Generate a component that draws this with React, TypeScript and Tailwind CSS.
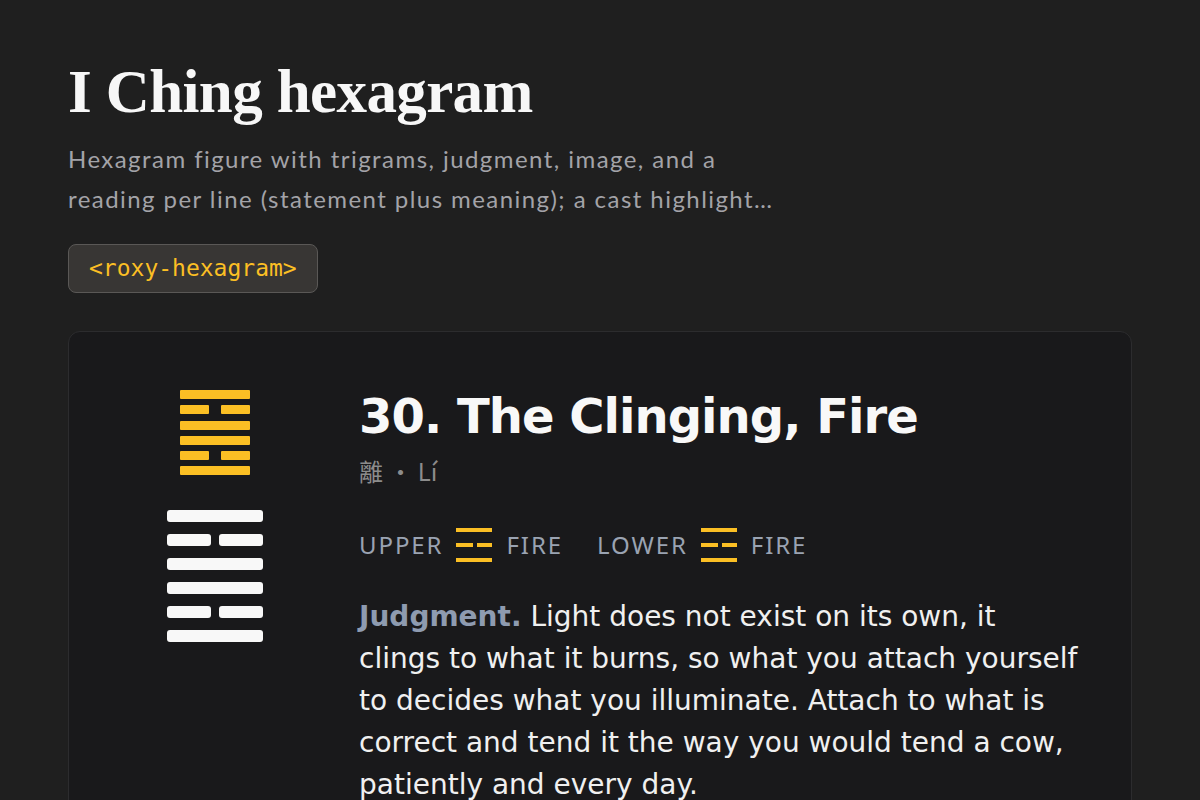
import React from 'react'

type Line = 'yang' | 'yin'

// top to bottom
const lines: Line[] = ['yang', 'yin', 'yang', 'yang', 'yin', 'yang']

const SmallFigure: React.FC = () => (
  <div className="flex flex-col gap-[6.2px] w-[70px]">
    {lines.map((l, i) =>
      l === 'yang'
        ? <div key={i} className="h-[9px] bg-[#fbbf24] rounded-[1px]" />
        : (
          <div key={i} className="flex justify-between h-[9px]">
            <div className="w-[29px] bg-[#fbbf24] rounded-[1px]" />
            <div className="w-[29px] bg-[#fbbf24] rounded-[1px]" />
          </div>
          )
    )}
  </div>
)

const LargeFigure: React.FC = () => (
  <div className="flex flex-col gap-[12px] w-[96px]">
    {lines.map((l, i) =>
      l === 'yang'
        ? <div key={i} className="h-[12px] bg-[#f8f8f8] rounded-[3px]" />
        : (
          <div key={i} className="flex justify-between h-[12px]">
            <div className="w-[44px] bg-[#f8f8f8] rounded-[3px]" />
            <div className="w-[44px] bg-[#f8f8f8] rounded-[3px]" />
          </div>
          )
    )}
  </div>
)

// fire trigram, drawn small next to the labels
const Trigram: React.FC = () => (
  <div className="flex flex-col gap-[11px] w-[36px]">
    <div className="h-[4px] bg-[#fbbf24]" />
    <div className="flex justify-between h-[4px]">
      <div className="w-[17px] bg-[#fbbf24]" />
      <div className="w-[15px] bg-[#fbbf24]" />
    </div>
    <div className="h-[4px] bg-[#fbbf24]" />
  </div>
)

const App: React.FC = () => {
  return (
    <div className="min-h-screen bg-[#1f1f1f] px-[68px] pt-[55px] pb-16">
      <h1 className="text-[61px] leading-[1.2] font-bold text-[#f7f7f7] font-['Liberation_Serif',serif] tracking-[-0.01em]">
        I Ching hexagram
      </h1>
      <p className="mt-[11px] max-w-[730px] text-[24px] leading-[40px] tracking-[0.06em] text-[#a3a3a8] font-['Lato',sans-serif]">
        Hexagram figure with trigrams, judgment, image, and a reading per line (statement plus meaning); a cast highlight…
      </p>
      <div className="mt-[25px] inline-flex items-center h-[49px] px-[20px] rounded-[8px] border border-[#5a5856] bg-[#383634]">
        <code className="text-[23px] text-[#fbbf24] font-['DejaVu_Sans_Mono',monospace]">&lt;roxy-hexagram&gt;</code>
      </div>

      <div className="mt-[38px] rounded-[12px] border border-[#2c2c2e] bg-[#19191b] px-[48px] pt-[58px] pb-12 flex gap-[46px]">
        <div className="w-[196px] shrink-0 flex flex-col items-center gap-[35px]">
          <SmallFigure />
          <LargeFigure />
        </div>
        <div className="flex-1 font-['DejaVu_Sans',sans-serif]">
          <h2 className="text-[48px] leading-[1.1] font-bold text-[#f8f8f8] tracking-[-0.02em]">
            30. The Clinging, Fire
          </h2>
          <div className="mt-[10px] text-[24px] leading-[36px] text-[#8c8c8c] font-['Noto_Sans_CJK_SC',sans-serif]">
            離 · Lí
          </div>
          <div className="mt-[38px] h-[36px] flex items-center text-[24px] tracking-[0.08em] text-[#9aa3b2] font-['Noto_Sans',sans-serif]">
            <span>UPPER</span>
            <span className="ml-[13px] mr-[14px]"><Trigram /></span>
            <span>FIRE</span>
            <span className="ml-[34px]">LOWER</span>
            <span className="ml-[13px] mr-[14px]"><Trigram /></span>
            <span>FIRE</span>
          </div>
          <p className="mt-[33px] text-[28px] leading-[42px] text-[#f0f0f0]">
            <span className="font-bold text-[#8e9bb0]">Judgment.</span> Light does not exist on its own, it clings to what it burns, so what you attach yourself to decides what you illuminate. Attach to what is correct and tend it the way you would tend a cow, patiently and every day.
          </p>
        </div>
      </div>
    </div>
  )
}

export default App
